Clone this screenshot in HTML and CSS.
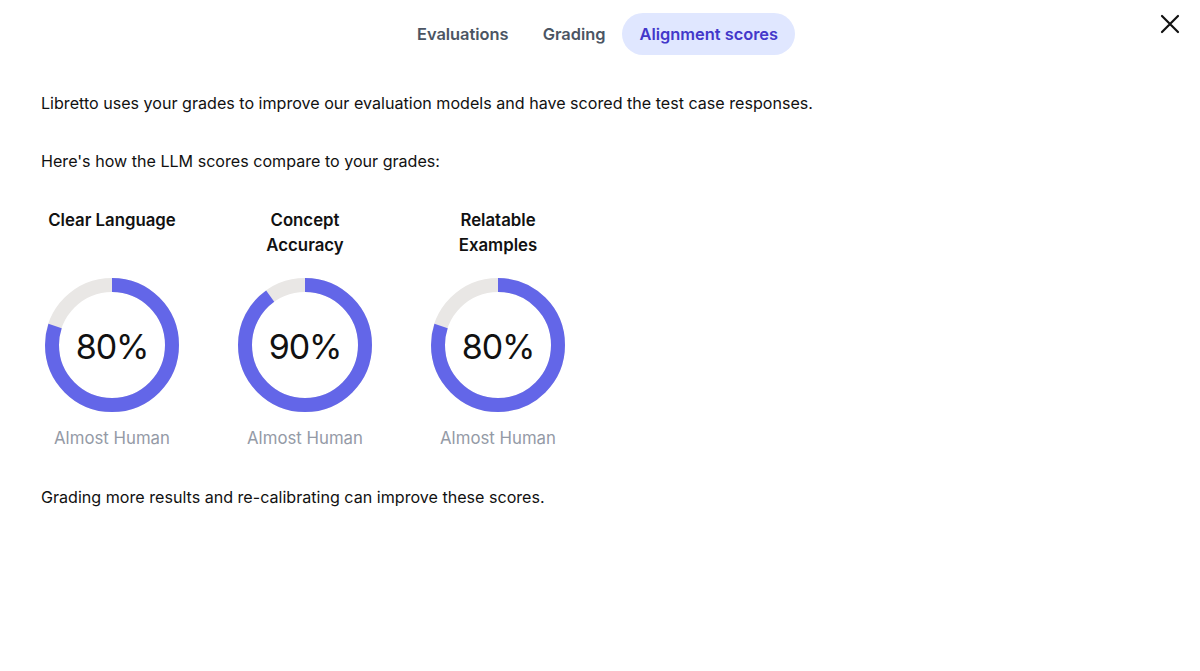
FILE: index.html
```html
<!DOCTYPE html>
<html lang="en">
<head>
<meta charset="utf-8">
<title>Alignment scores</title>
<link rel="stylesheet" href="styles.css">
</head>
<body>
<header class="topbar">
  <div></div>
  <nav class="tabs">
    <span class="tab">Evaluations</span>
    <span class="tab">Grading</span>
    <span class="tab tab-active">Alignment scores</span>
  </nav>
  <button class="close" aria-label="Close">
    <svg width="20" height="20" viewBox="0 0 20 20"><path d="M2 2 L18 18 M18 2 L2 18" stroke="#111" stroke-width="2.2" stroke-linecap="round" fill="none"/></svg>
  </button>
</header>
<main class="content">
  <p class="lead">Libretto uses your grades to improve our evaluation models and have scored the test case responses.</p>
  <p class="lead second">Here's how the LLM scores compare to your grades:</p>
  <div class="scores">
    <div class="score">
      <div class="score-title">Clear Language</div>
      <svg class="donut" width="134" height="134" viewBox="0 0 134 134">
        <circle cx="67" cy="67" r="60" class="track"/>
        <circle cx="67" cy="67" r="60" class="bar" stroke-dasharray="301.59 376.99"/>
        <text x="67" y="68" class="pct">80%</text>
      </svg>
      <div class="score-label">Almost Human</div>
    </div>
    <div class="score">
      <div class="score-title">Concept Accuracy</div>
      <svg class="donut" width="134" height="134" viewBox="0 0 134 134">
        <circle cx="67" cy="67" r="60" class="track"/>
        <circle cx="67" cy="67" r="60" class="bar" stroke-dasharray="339.29 376.99"/>
        <text x="67" y="68" class="pct">90%</text>
      </svg>
      <div class="score-label">Almost Human</div>
    </div>
    <div class="score">
      <div class="score-title">Relatable Examples</div>
      <svg class="donut" width="134" height="134" viewBox="0 0 134 134">
        <circle cx="67" cy="67" r="60" class="track"/>
        <circle cx="67" cy="67" r="60" class="bar" stroke-dasharray="301.59 376.99"/>
        <text x="67" y="68" class="pct">80%</text>
      </svg>
      <div class="score-label">Almost Human</div>
    </div>
  </div>
  <p class="lead footer-note">Grading more results and re-calibrating can improve these scores.</p>
</main>
</body>
</html>
```
FILE: styles.css
```css
html, body {
  margin: 0;
  padding: 0;
  background: #fff;
}
body {
  font-family: Inter, "Noto Sans", sans-serif;
  color: #111;
}
.topbar {
  display: grid;
  grid-template-columns: 1fr auto 1fr;
  align-items: start;
  padding-top: 13px;
}
.tabs {
  display: flex;
  margin-right: 5px;
}
.tab {
  display: flex;
  align-items: center;
  height: 42px;
  padding: 0 17px;
  border-radius: 21px;
  font-size: 16.4px;
  font-weight: 600;
  color: #4b5563;
}
.tab-active {
  background: #e0e7ff;
  color: #4338ca;
}
.close {
  justify-self: end;
  margin-right: 20px;
  margin-top: 1px;
  width: 20px;
  height: 20px;
  padding: 0;
  border: 0;
  background: none;
  display: flex;
}
.content {
  padding: 0 41px;
}
.lead {
  margin: 0;
  font-size: 16.1px;
  line-height: 24px;
}
.lead:first-child {
  margin-top: 36px;
}
.second {
  margin-top: 34px;
}
.scores {
  display: flex;
  gap: 51px;
  margin-top: 35px;
}
.score {
  width: 142px;
  display: flex;
  flex-direction: column;
  align-items: center;
}
.score-title {
  font-size: 16.8px;
  font-weight: 600;
  line-height: 25px;
  text-align: center;
  height: 50px;
  padding: 0 6px;
}
.donut {
  margin-top: 20px;
  display: block;
}
.track {
  fill: none;
  stroke: #e9e7e5;
  stroke-width: 14;
}
.bar {
  fill: none;
  stroke: #6366e8;
  stroke-width: 14;
  transform: rotate(-90deg);
  transform-origin: 67px 67px;
}
.pct {
  font-family: Inter, "Noto Sans", sans-serif;
  font-size: 34px;
  letter-spacing: -1.2px;
  font-weight: 400;
  fill: #111;
  text-anchor: middle;
  dominant-baseline: central;
}
.score-label {
  margin-top: 14px;
  font-size: 16.8px;
  line-height: 24px;
  color: #949aa6;
}
.footer-note {
  margin-top: 35px;
}
```
